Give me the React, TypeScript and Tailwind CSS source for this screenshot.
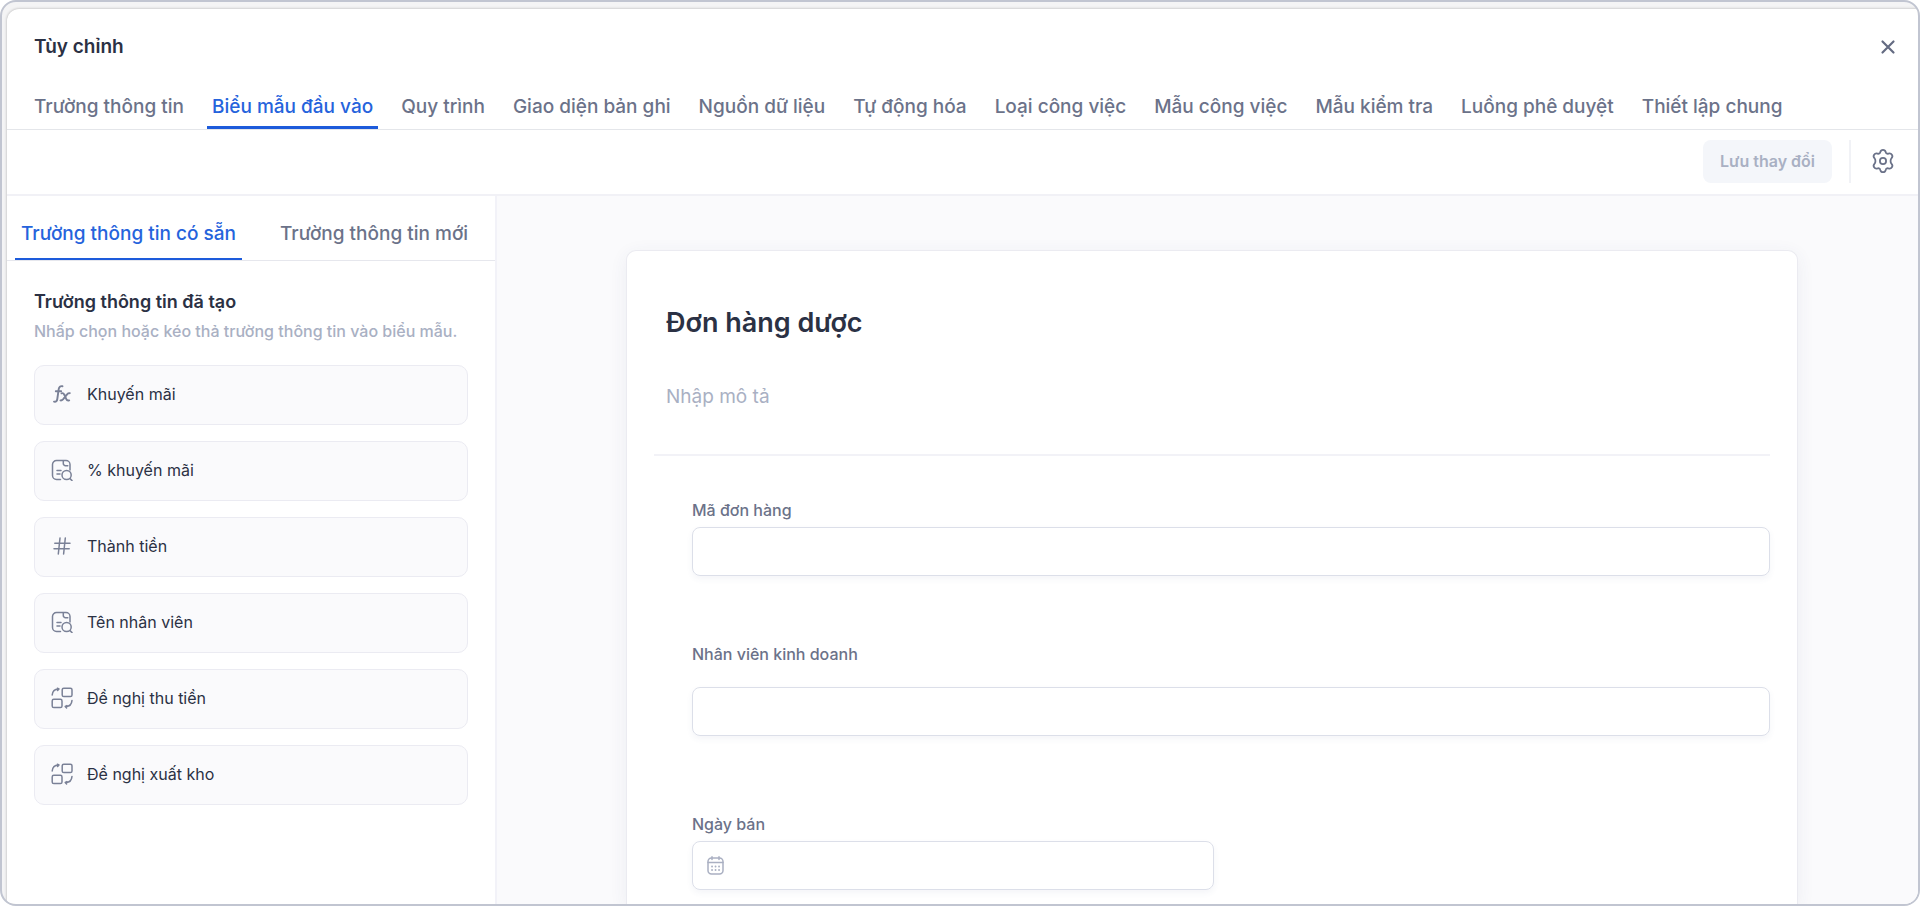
import { useState } from "react";

type Field = {
  id: string;
  name: string;
  icon: "formula" | "lookup" | "number" | "relation";
};

const tabs: string[] = [
  'Trường thông tin',
  'Biểu mẫu đầu vào',
  'Quy trình',
  'Giao diện bản ghi',
  'Nguồn dữ liệu',
  'Tự động hóa',
  'Loại công việc',
  'Mẫu công việc',
  'Mẫu kiểm tra',
  'Luồng phê duyệt',
  'Thiết lập chung',
];

const fields: Field[] = [
  { id: 'discount', name: 'Khuyến mãi', icon: 'formula' },
  { id: 'discount-percent', name: '% khuyến mãi', icon: 'lookup' },
  { id: 'amount', name: 'Thành tiền', icon: 'number' },
  { id: 'employee', name: 'Tên nhân viên', icon: 'lookup' },
  { id: 'payment-request', name: 'Đề nghị thu tiền', icon: 'relation' },
  { id: 'stock-request', name: 'Đề nghị xuất kho', icon: 'relation' },
];

const FieldIcon = ({ icon }: { icon: Field["icon"] }) => (
  <svg
    viewBox="0 0 22 22"
    className="h-[22px] w-[22px] shrink-0 text-[#7a8197]"
    fill="none"
    stroke="currentColor"
    strokeWidth="1.5"
    strokeLinecap="round"
    strokeLinejoin="round"
    aria-hidden="true"
  >
    {icon === 'formula' && (
      <>
        <path d="M11.5 3.3c-2.3-.5-3.4.5-3.8 2.8L6.3 16c-.3 2.2-1.3 3.1-3.3 2.6M4.8 8.2h5.4" strokeWidth="1.900" />
        <path d="M10.500 10.300c1.300-.5 2.100 0 2.700 1.200l2.100 4.700c.5 1.200 1.300 1.700 2.900 1.200M18.800 10.200c-1.200-.2-1.900.2-2.700 1.100l-4.100 5c-.8.9-1.400 1.300-2.500 1.100" strokeWidth="1.900" />
      </>
    )}
    {icon === 'lookup' && (
      <>
        <path d="M9.5 20.5h-4a4 4 0 0 1-4-4v-11a4 4 0 0 1 4-4H15a4 4 0 0 1 4 4V11" />
        <path d="M12.3 1.8v2.700a2.200 2.200 0 0 0 2.200 2.200h2.300M6 11.500h4M6 15h3" />
        <circle cx="15.6" cy="16" r="4.6" />
        <path d="m19 19.600 2 2" />
      </>
    )}
    {icon === 'number' && <path d="M9 3 7.3 19M14.3 3l-1.700 16M3.800 8.300H19M3 13.700h15.200" />}
    {icon === 'relation' && (
      <>
        <rect x="11.2" y="1.2" width="9.8" height="8.3" rx="1.6" />
        <rect x="1.2" y="12.3" width="9.8" height="8.3" rx="1.6" />
        <path d="M1.2 8C1.5 4.5 3.7 2 7.2 1.9M6.3 1.2l1.700.8-1.400 1.400M21 13.400c-.3 3.500-2.300 6-5.900 6.100M15.900 18.600l-1.700.9 1.400 1.400" />
      </>
    )}
  </svg>
);

const App: React.FC = () => {
  const [activeTab, setActiveTab] = useState<string>('Biểu mẫu đầu vào');
  const [sideTab, setSideTab] = useState<string>('Trường thông tin có sẵn');

  return (
    <div className="flex min-h-screen flex-col overflow-hidden rounded-2xl border-2 border-[#c1c5d1] bg-[#f4f4f5] pt-[7px] pl-[5px] font-['Inter',sans-serif] text-[#2b3144]">
      <div className="flex grow flex-col rounded-tl-xl bg-white shadow-[0_0_3px_rgba(0,0,0,0.3)]">
        <header className="border-b border-[#e4e6ea]">
          <div className="flex h-[76px] items-center justify-between pr-[22px] pl-[27px]">
            <h1 className="text-[19px] font-semibold">Tùy chỉnh</h1>
            <button type="button" aria-label="Đóng" className="text-[#646b82]">
              <svg viewBox="0 0 16 16" className="h-4 w-4" fill="none" stroke="currentColor" strokeWidth="2.2" strokeLinecap="round">
                <path d="m2.500 2.500 11 11M13.500 2.500l-11 11" />
              </svg>
            </button>
          </div>
          <nav className="flex gap-[18px] pl-[22px]">
            {tabs.map((tab) => (
              <button
                key={tab}
                type="button"
                onClick={() => setActiveTab(tab)}
                className={`h-11 border-b-[3px] px-[5px] pt-1 text-[19px] font-medium whitespace-nowrap ${tab === activeTab ? 'border-[#1d5bdb] text-[#2563dc]' : 'border-transparent text-[#6b7289]'}`}
              >
                {tab}
              </button>
            ))}
          </nav>
        </header>

        <div className="flex h-[66px] items-center justify-end border-b-2 border-[#f1f1f6] pr-[23px] pb-[2px]">
          <button type="button" disabled className="h-[43px] rounded-lg bg-[#f4f6fa] px-[17px] text-base font-semibold text-[#a9b0c3]">
            Lưu thay đổi
          </button>
          <div className="ml-[17px] h-[43px] w-[2px] bg-[#f1f2f6]"></div>
          <button type="button" aria-label="Cài đặt" className="ml-5 text-[#6b7289]">
            <svg viewBox="0 0 24 24" className="h-6 w-6" fill="none" stroke="currentColor" strokeWidth="1.8" strokeLinejoin="round">
              <path d="M9.300 3.100C9.700 1.600 10.700.9 12 .9s2.300.7 2.700 2.200c.3 1.300 1.400 1.900 2.700 1.500 1.600-.4 2.700-.1 3.500 1.100s.7 2.400-.5 3.600c-1.100 1.100-1.100 4.300 0 5.400 1.200 1.200 1.300 2.400.5 3.600s-1.900 1.500-3.500 1.100c-1.300-.4-2.400.2-2.700 1.500-.4 1.500-1.400 2.200-2.700 2.200s-2.300-.7-2.700-2.200c-.3-1.300-1.400-1.900-2.700-1.500-1.600.4-2.700.1-3.500-1.100s-.7-2.400.5-3.600c1.100-1.100 1.100-4.300 0-5.400-1.200-1.200-1.300-2.400-.5-3.600s1.900-1.500 3.500-1.100c1.300.4 2.400-.2 2.700-1.500Z" />
              <circle cx="12" cy="12" r="3.1" />
            </svg>
          </button>
        </div>

        <div className="flex grow">
          <aside className="w-[490px] shrink-0 border-r-2 border-[#f2f2f8]">
            <div className="flex gap-8 border-b border-[#e6e7ed] pl-2">
              {['Trường thông tin có sẵn', 'Trường thông tin mới'].map((tab) => (
                <button
                  key={tab}
                  type="button"
                  onClick={() => setSideTab(tab)}
                  className={`h-16 border-b-2 px-[6px] pt-[14px] text-[19px] font-medium whitespace-nowrap ${tab === sideTab ? 'border-[#1d5bdb] text-[#2563dc]' : 'border-transparent text-[#6b7289]'}`}
                >
                  {tab}
                </button>
              ))}
            </div>
            <div className="px-[27px] pt-7">
              <h2 className="text-[18px] leading-[26px] font-semibold">Trường thông tin đã tạo</h2>
              <p className="text-base leading-8 font-medium whitespace-nowrap text-[#a9b0c3]">Nhấp chọn hoặc kéo thả trường thông tin vào biểu mẫu.</p>
              <ul className="mt-[18px] flex flex-col gap-4">
                {fields.map((field) => (
                  <li key={field.id} className="flex h-[60px] items-center gap-[14px] rounded-[10px] border border-[#ebebf2] bg-[#fafafc] pb-[2px] pl-4">
                    <FieldIcon icon={field.icon} />
                    <span className="text-base">{field.name}</span>
                  </li>
                ))}
              </ul>
            </div>
          </aside>

          <main className="flex grow flex-col bg-[#fafafc] pt-[54px] pr-[120px] pl-[129px]">
            <form className="grow rounded-t-[10px] border border-b-0 border-[#ebebf1] bg-white px-[27px] pt-10 shadow-[0_4px_18px_rgba(60,70,110,0.07)]">
              <div className="border-b-2 border-[#f2f2f7] pb-10 pl-3">
                <h2 className="text-[27px] leading-[64px] font-semibold">Đơn hàng dược</h2>
                <input
                  type="text"
                  aria-label="Mô tả"
                  placeholder="Nhập mô tả"
                  className="mt-[23px] h-9 w-full text-[19px] outline-none placeholder:text-[#a9b0c3]"
                />
              </div>
              <div className="flex flex-col pt-[42px] pl-[38px]">
                <label htmlFor="order-code" className="text-base font-medium text-[#6b7289]">Mã đơn hàng</label>
                <input id="order-code" type="text" className="mt-[5px] h-[49px] rounded-lg border border-[#dcdfe9] px-4 shadow-[0_3px_6px_rgba(60,90,140,0.06)]" />

                <label htmlFor="salesman" className="mt-[66px] text-base font-medium text-[#6b7289]">Nhân viên kinh doanh</label>
                <input id="salesman" type="text" className="mt-[21px] h-[49px] rounded-lg border border-[#dcdfe9] px-4 shadow-[0_3px_6px_rgba(60,90,140,0.06)]" />

                <label htmlFor="sale-date" className="mt-[76px] text-base font-medium text-[#6b7289]">Ngày bán</label>
                <div className="mt-[5px] flex h-[49px] w-[522px] items-center gap-3 rounded-lg border border-[#dcdfe9] px-[14px] shadow-[0_3px_6px_rgba(60,90,140,0.06)]">
                  <svg viewBox="0 0 17 20" className="h-5 w-[17px] shrink-0 text-[#aab0c2]" fill="none" stroke="currentColor" strokeWidth="1.5" strokeLinecap="round">
                    <rect x="1" y="2" width="15" height="16" rx="3.5" />
                    <path d="M1 6.500h15M5 .8v2.700M12 .8v2.700" />
                    <path d="M5 10.500h.1M8.500 10.500h.1M12 10.500h.1M5 14h.1M8.500 14h.1M12 14h.1" strokeWidth="1.8" />
                  </svg>
                  <input id="sale-date" type="text" className="h-full grow outline-none" />
                </div>
              </div>
            </form>
          </main>
        </div>
      </div>
    </div>
  );
};

export default App;
